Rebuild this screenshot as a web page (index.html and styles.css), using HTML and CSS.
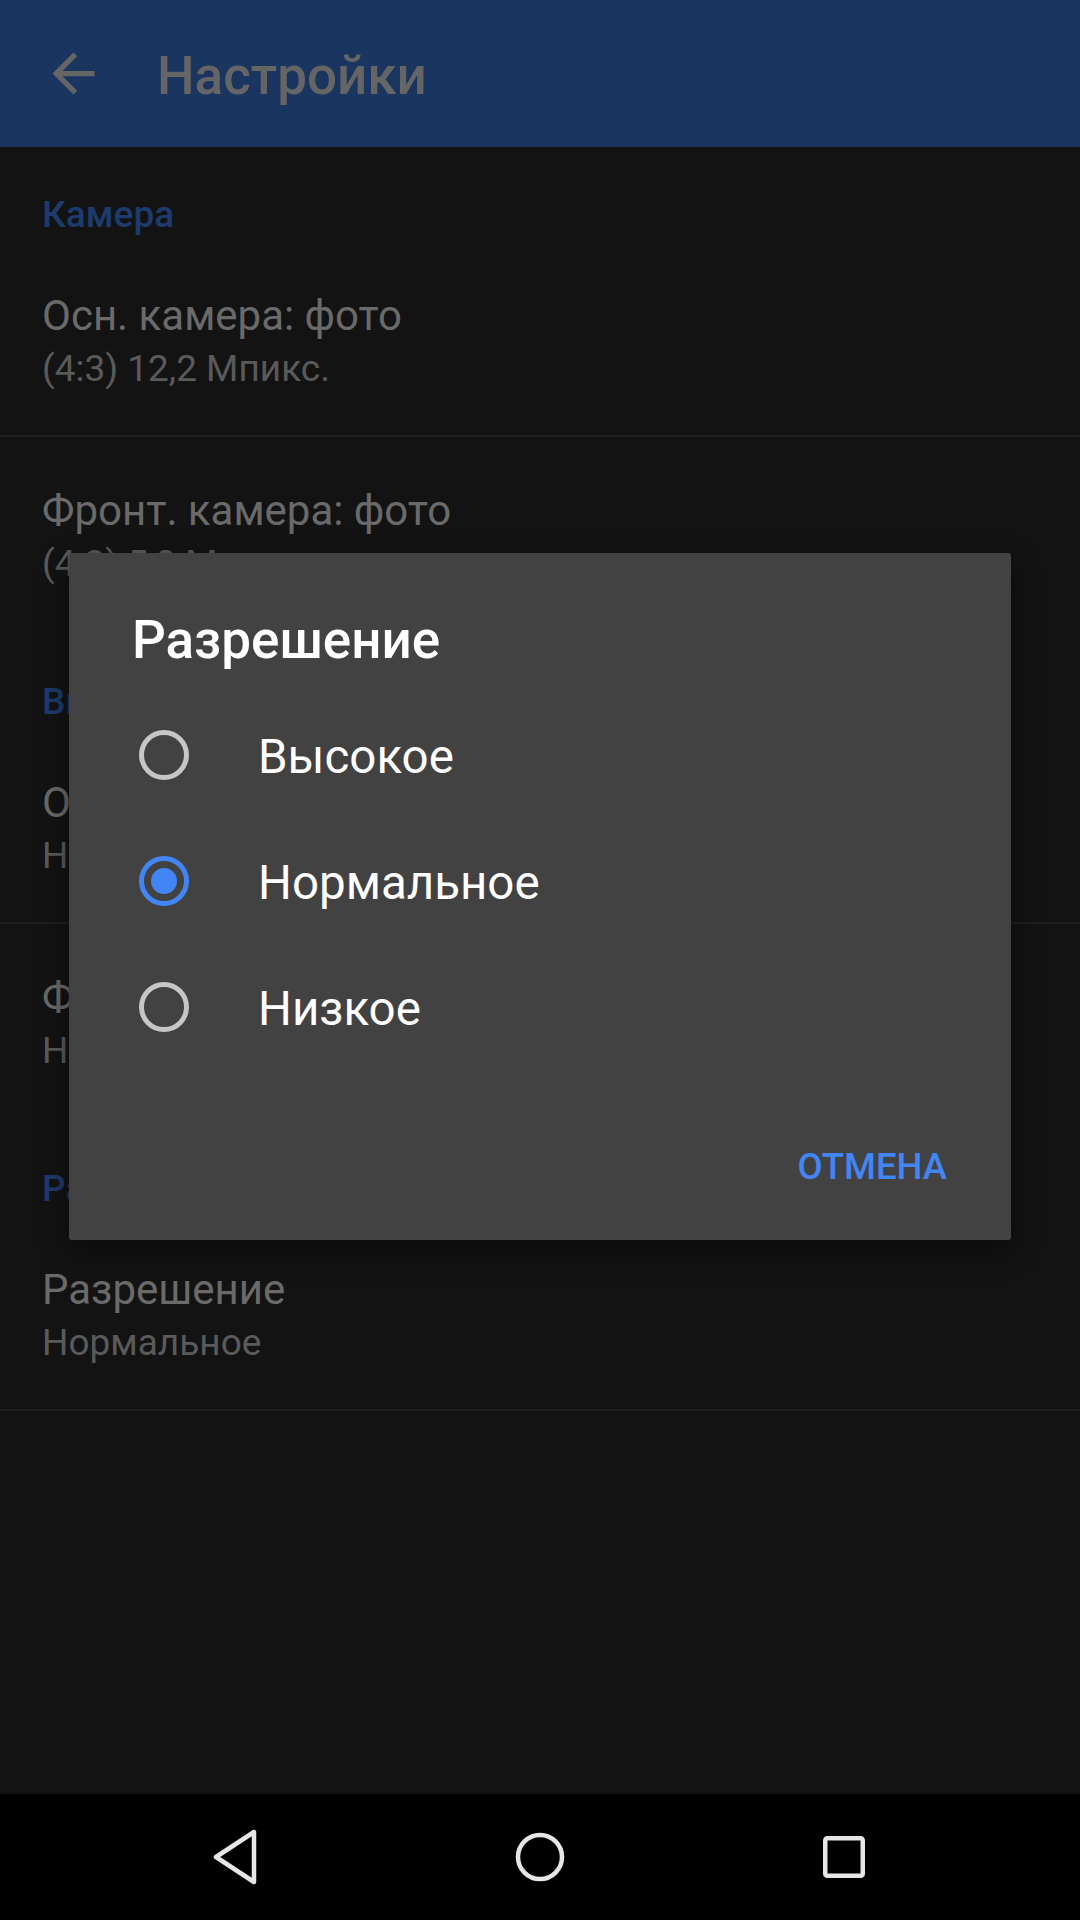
FILE: index.html
```html
<!DOCTYPE html>
<html lang="ru">
<head>
<meta charset="utf-8">
<title>Настройки</title>
<link rel="stylesheet" href="styles.css">
</head>
<body>
<div class="screen">
  <header class="appbar">
    <span class="appbar-icon">
      <svg width="63" height="63" viewBox="0 0 24 24"><path fill="#656565" d="M20 11H7.83l5.59-5.59L12 4l-8 8 8 8 1.41-1.41L7.83 13H20v-2z"/></svg>
    </span>
    <h1 class="appbar-title">Настройки</h1>
  </header>

  <main class="list">
    <section class="category first">
      <h2 class="category-title">Камера</h2>
      <div class="item divided">
        <div class="item-title">Осн. камера: фото</div>
        <div class="item-sub">(4:3) 12,2 Мпикс.</div>
      </div>
      <div class="item">
        <div class="item-title">Фронт. камера: фото</div>
        <div class="item-sub">(4:3) 5,0 Мпикс.</div>
      </div>
    </section>
    <section class="category">
      <h2 class="category-title">Видео</h2>
      <div class="item divided">
        <div class="item-title">Осн. камера: видео</div>
        <div class="item-sub">HD 1080p</div>
      </div>
      <div class="item">
        <div class="item-title">Фронт. камера: видео</div>
        <div class="item-sub">HD 720p</div>
      </div>
    </section>
    <section class="category">
      <h2 class="category-title">Разное</h2>
      <div class="item divided">
        <div class="item-title">Разрешение</div>
        <div class="item-sub">Нормальное</div>
      </div>
    </section>
  </main>

  <nav class="navbar">
    <span class="nav-btn">
      <svg width="100" height="126" viewBox="0 0 100 126"><polygon points="30,63 68,38 68,88" fill="none" stroke="#e6e6e6" stroke-width="4.5" stroke-linejoin="round"/></svg>
    </span>
    <span class="nav-btn">
      <svg width="100" height="126" viewBox="0 0 100 126"><circle cx="50" cy="63" r="22" fill="none" stroke="#e6e6e6" stroke-width="4.5"/></svg>
    </span>
    <span class="nav-btn">
      <svg width="100" height="126" viewBox="0 0 100 126"><rect x="31.25" y="44.25" width="37.5" height="37.5" rx="2" fill="none" stroke="#e6e6e6" stroke-width="4.5"/></svg>
    </span>
  </nav>

  <div class="dialog">
    <h2 class="dialog-title">Разрешение</h2>
    <div class="options">
      <div class="option">
        <span class="radio"></span>
        <span class="option-label">Высокое</span>
      </div>
      <div class="option">
        <span class="radio checked"></span>
        <span class="option-label">Нормальное</span>
      </div>
      <div class="option">
        <span class="radio"></span>
        <span class="option-label">Низкое</span>
      </div>
    </div>
    <div class="actions">
      <span class="btn">ОТМЕНА</span>
    </div>
  </div>
</div>
</body>
</html>
```

FILE: styles.css
```css
html, body {
  margin: 0;
  padding: 0;
  background: #131313;
}

body {
  font-family: Roboto, "Noto Sans", sans-serif;
}

.screen {
  position: relative;
  width: 1080px;
  height: 1920px;
  display: flex;
  flex-direction: column;
  background: #131313;
  overflow: hidden;
}

/* App bar */
.appbar {
  height: 147px;
  flex: 0 0 147px;
  background: #1b3561;
  display: flex;
  align-items: flex-start;
}

.appbar-icon {
  display: flex;
  margin: 42px 0 0 42px;
  width: 63px;
  height: 63px;
}

.appbar-title {
  margin: 45px 0 0 52px;
  font-size: 53px;
  line-height: 62px;
  font-weight: 500;
  color: #656565;
}

/* List */
.list {
  flex: 1;
  display: flex;
  flex-direction: column;
}

.category-title {
  margin: 0;
  padding: 50px 42px 5px;
  font-size: 37px;
  line-height: 44px;
  font-weight: 500;
  color: #1d3b6d;
}

.category.first .category-title {
  padding-top: 46px;
}

.item {
  padding: 49px 42px 44px;
}

.item.divided {
  border-bottom: 2px solid #1f1f1f;
}

.item-title {
  font-size: 42px;
  line-height: 50px;
  color: #6a6a6a;
}

.item-sub {
  margin-top: 6px;
  font-size: 37px;
  line-height: 44px;
  color: #5a5a5a;
}

/* Navigation bar */
.navbar {
  flex: 0 0 126px;
  height: 126px;
  background: #000;
  display: flex;
  justify-content: center;
  gap: 204px;
}

.nav-btn {
  display: flex;
  width: 100px;
  height: 126px;
}

/* Dialog */
.dialog {
  position: absolute;
  left: 69px;
  top: 553px;
  width: 942px;
  height: 687px;
  background: #424242;
  border-radius: 3px;
  box-shadow: 0 10px 30px rgba(0, 0, 0, 0.45);
  display: flex;
  flex-direction: column;
}

.dialog-title {
  margin: 0;
  padding: 56px 63px 0;
  font-size: 53px;
  line-height: 62px;
  font-weight: 500;
  color: #ffffff;
}

.options {
  margin-top: 21px;
  display: flex;
  flex-direction: column;
}

.option {
  height: 126px;
  display: flex;
  align-items: center;
  padding-left: 70px;
}

.radio {
  box-sizing: border-box;
  width: 50px;
  height: 50px;
  border: 5px solid #c6c6c6;
  border-radius: 50%;
  display: flex;
  align-items: center;
  justify-content: center;
}

.radio.checked {
  border-color: #4285f4;
}

.radio.checked::after {
  content: "";
  width: 26px;
  height: 26px;
  border-radius: 50%;
  background: #4285f4;
}

.option-label {
  margin-left: 69px;
  padding-top: 3px;
  font-size: 47.5px;
  line-height: 56px;
  color: #ffffff;
}

.actions {
  margin-top: auto;
  display: flex;
  justify-content: flex-end;
  padding: 0 64px 51px 0;
}

.btn {
  font-size: 36.5px;
  line-height: 44px;
  font-weight: 500;
  color: #4285f4;
}
```
